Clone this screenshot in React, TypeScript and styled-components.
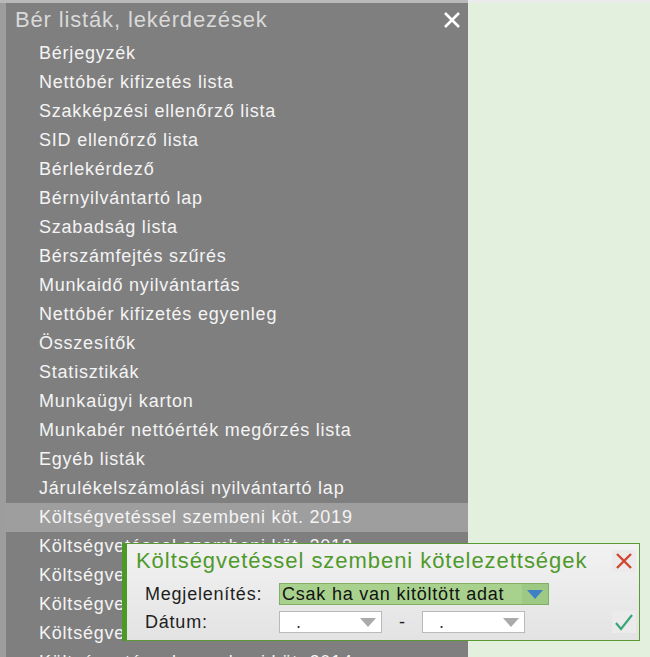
import React from 'react';
import styled, {createGlobalStyle} from 'styled-components';

const GlobalStyle = createGlobalStyle`
    html, body {
        margin: 0;
        padding: 0;
        width: 650px;
        height: 657px;
        overflow: hidden;
        background: #9d9d9d;
        font-family: "Liberation Sans", Arial, sans-serif;
    }
`

const Screen = styled.div`
    position: relative;
    width: 650px;
    height: 657px;
    display: grid;
    grid-template-rows: 3px 1fr;
    grid-template-columns: 6px 462px 1fr;
    overflow: hidden;
`

const TopStrip = styled.div`
    grid-column: 1 / 4;
    display: grid;
    grid-template-columns: 468px 1fr;
    & > div:first-child { background: #b9b9b9; }
    & > div:last-child { background: #ececec; }
`

const SideStrip = styled.div`
    background: #9d9d9d;
`

const MenuPanel = styled.div`
    background: #7f7f7f;
    display: flex;
    flex-direction: column;
    overflow: hidden;
`

const GreenArea = styled.div`
    background: #e2f0dd;
`

const PanelHead = styled.div`
    height: 36px;
    flex-shrink: 0;
    display: flex;
    align-items: center;
    justify-content: space-between;
    padding: 0 5px 3px 9px;
    box-sizing: border-box;
`

const PanelTitle = styled.span`
    font-size: 22px;
    color: #d9d9d9;
    letter-spacing: 0.85px;
`

const CloseButton = styled.span`
    width: 22px;
    height: 22px;
    display: flex;
    align-items: center;
    justify-content: center;
`

const MenuItem = styled.div<{$active?: boolean}>`
    height: 29px;
    flex-shrink: 0;
    display: flex;
    align-items: center;
    font-size: 18px;
    letter-spacing: 0.78px;
    color: #f4f4f4;
    white-space: nowrap;
    background: ${p => p.$active ? '#9e9e9e' : 'transparent'};
    margin-left: ${p => p.$active ? '-6px' : '0'};
    padding-left: ${p => p.$active ? '39px' : '33px'};
`

const Dialog = styled.div`
    position: absolute;
    left: 122px;
    top: 543px;
    width: 512px;
    height: 96px;
    background: linear-gradient(#f2f2f2, #e3e3e3);
    border: 1px solid #5a9a35;
    border-left: 5px solid #4b9a25;
    display: flex;
    flex-direction: column;
`

const DialogHead = styled.div`
    height: 36px;
    flex-shrink: 0;
    display: flex;
    align-items: center;
    justify-content: space-between;
    padding: 0 3px 2px 9px;
    box-sizing: border-box;
`

const DialogTitle = styled.span`
    font-size: 22px;
    letter-spacing: 0.95px;
    color: #4f9a2c;
`

const IconBox = styled.span`
    width: 24px;
    height: 22px;
    display: flex;
    align-items: center;
    justify-content: center;
    background: #ebebeb;
`

const FieldRow = styled.div`
    height: 28px;
    flex-shrink: 0;
    display: grid;
    grid-template-columns: 134px auto 1fr;
    align-items: center;
    padding-left: 18px;
`

const FieldLabel = styled.span`
    font-size: 18px;
    letter-spacing: 0.78px;
    color: #1e1e1e;
`

const Select = styled.div<{$width: number; $green?: boolean}>`
    width: ${p => p.$width}px;
    height: 22px;
    box-sizing: border-box;
    display: flex;
    align-items: center;
    justify-content: space-between;
    padding: 0 0 0 2px;
    font-size: 18px;
    letter-spacing: 0.78px;
    color: ${p => p.$green ? '#111' : '#333'};
    background: ${p => p.$green ? '#a9d18e' : '#fff'};
    border: 1px solid ${p => p.$green ? '#7fae64' : '#b9b9b9'};
`

const SelectText = styled.span<{$dot?: boolean}>`
    padding-left: ${p => p.$dot ? '14px' : '0'};
    line-height: 1;
    white-space: nowrap;
`

const Arrow = styled.span<{$green?: boolean}>`
    width: 26px;
    height: 100%;
    display: flex;
    align-items: center;
    justify-content: center;
    background: ${p => p.$green ? '#9ec984' : 'transparent'};
`

const DateRange = styled.div`
    display: flex;
    align-items: center;
`

const Dash = styled.span`
    width: 40px;
    text-align: center;
    font-size: 18px;
    color: #222;
`

const OkSlot = styled.div`
    display: flex;
    justify-content: flex-end;
    padding-right: 3px;
`

const items = [
    'Bérjegyzék',
    'Nettóbér kifizetés lista',
    'Szakképzési ellenőrző lista',
    'SID ellenőrző lista',
    'Bérlekérdező',
    'Bérnyilvántartó lap',
    'Szabadság lista',
    'Bérszámfejtés szűrés',
    'Munkaidő nyilvántartás',
    'Nettóbér kifizetés egyenleg',
    'Összesítők',
    'Statisztikák',
    'Munkaügyi karton',
    'Munkabér nettóérték megőrzés lista',
    'Egyéb listák',
    'Járulékelszámolási nyilvántartó lap',
    'Költségvetéssel szembeni köt. 2019',
    'Költségvetéssel szembeni köt. 2018',
    'Költségvetéssel szembeni köt. 2017',
    'Költségvetéssel szembeni köt. 2016',
    'Költségvetéssel szembeni köt. 2015',
    'Költségvetéssel szembeni köt. 2014',
];

const Triangle = ({color}: {color: string}) => (
    <svg width="16" height="9" viewBox="0 0 16 9">
        <path d="M0 0 H16 L8 9 Z" fill={color}/>
    </svg>
)

export default function App() {
    return (
        <Screen>
            <GlobalStyle/>
            <TopStrip><div/><div/></TopStrip>
            <SideStrip/>
            <MenuPanel>
                <PanelHead>
                    <PanelTitle>Bér listák, lekérdezések</PanelTitle>
                    <CloseButton>
                        <svg width="18" height="18" viewBox="0 0 18 18">
                            <path d="M2 2 L16 16 M16 2 L2 16" stroke="#fff" strokeWidth="2.6"/>
                        </svg>
                    </CloseButton>
                </PanelHead>
                {items.map((item, i) => (
                    <MenuItem key={item} $active={i === 16}>{item}</MenuItem>
                ))}
            </MenuPanel>
            <GreenArea/>
            <Dialog>
                <DialogHead>
                    <DialogTitle>Költségvetéssel szembeni kötelezettségek</DialogTitle>
                    <IconBox>
                        <svg width="18" height="18" viewBox="0 0 18 18">
                            <path d="M2 2 L16 16 M16 2 L2 16" stroke="#d2452f" strokeWidth="2.4"/>
                        </svg>
                    </IconBox>
                </DialogHead>
                <FieldRow>
                    <FieldLabel>Megjelenítés:</FieldLabel>
                    <Select $width={270} $green>
                        <SelectText>Csak ha van kitöltött adat</SelectText>
                        <Arrow $green><Triangle color="#3f7fc6"/></Arrow>
                    </Select>
                </FieldRow>
                <FieldRow>
                    <FieldLabel>Dátum:</FieldLabel>
                    <DateRange>
                        <Select $width={103}>
                            <SelectText $dot>.</SelectText>
                            <Arrow><Triangle color="#aaaaaa"/></Arrow>
                        </Select>
                        <Dash>-</Dash>
                        <Select $width={103}>
                            <SelectText $dot>.</SelectText>
                            <Arrow><Triangle color="#aaaaaa"/></Arrow>
                        </Select>
                    </DateRange>
                    <OkSlot>
                        <IconBox>
                            <svg width="20" height="18" viewBox="0 0 20 18">
                                <path d="M2 10 L7 16 L18 2" stroke="#3ba67a" strokeWidth="2.2" fill="none"/>
                            </svg>
                        </IconBox>
                    </OkSlot>
                </FieldRow>
            </Dialog>
        </Screen>
    )
}
